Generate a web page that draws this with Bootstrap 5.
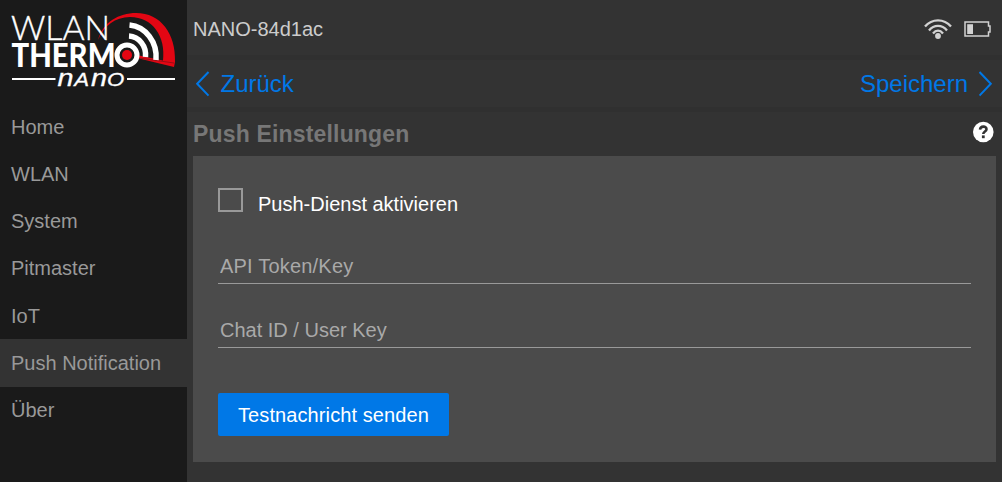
<!DOCTYPE html>
<html lang="de" data-bs-theme="dark">
<head>
<meta charset="utf-8">
<meta name="viewport" content="width=device-width, initial-scale=1">
<title>WLANThermo Nano</title>
<link href="https://cdn.jsdelivr.net/npm/bootstrap@5.3.0/dist/css/bootstrap.min.css" rel="stylesheet">
<style>
body{font-family:"Liberation Sans",Arial,sans-serif;font-size:20px;line-height:24px;background:#333;color:#ccc;overflow:hidden}
svg{display:block;flex:none}
.side{width:187px;background:#1a1a1a;padding-top:103.500px;position:relative}
.logo{position:absolute;left:0;top:0}
.side .nav-link{color:#999;padding:11.250px 11px 11.950px;line-height:24px;border-radius:0}
.side .nav-link.active{background:#333}
.topbar{height:60px;padding:0 11px 2px 6px;border-bottom:5px solid #303030}
.actions{height:52px;padding:0 9px 0 9px;border-bottom:5px solid #303030;font-size:24px}
.actions a{color:#0078e7;text-decoration:none}
.back{margin-left:10.500px}
.save{margin-right:11px}
.heading{height:44px;padding:0 0 0 6px}
.heading h1{font-size:23px;font-weight:700;line-height:44px;margin:0;color:#777;letter-spacing:.17px}
.panel{margin:0 6px;background:#4b4b4b;height:306px;padding:32px 25px 0;color:#fff}
.form-check-input.box{width:25px;height:24px;border:2px solid #999;border-radius:0;background:transparent;margin:0}
.pushlabel{margin:4px 0 0 15px}
.field.form-control{border:0;border-bottom:1px solid #999;border-radius:0;background:transparent;padding:0 2px;height:35px;font-size:20px;line-height:24px;color:#fff}
.field.form-control::placeholder{color:#a9a9a9;opacity:1}
.field.token{margin-top:33px;letter-spacing:.2px}
.field.chat{margin-top:29px}
.btn.send{background:#0078e7;color:#fff;border:0;border-radius:2px;width:231px;height:43px;font-size:20px;padding:1px 0 0;line-height:42px;margin-top:45px;letter-spacing:.1px}
</style>
</head>
<body>
<div class="d-flex vh-100">
  <aside class="side flex-shrink-0">
    <svg class="logo" width="187" height="100" viewBox="0 0 187 100" role="img" aria-label="WLANThermo Nano">
      <path d="M98 40C103 22 119 13 136 13C161 13 176 34 175 62L174 67L139 58.5V55.5L163 60.5C166 37 153 17 130 17C115 17 104 26 98 40Z" fill="#e30613"/>
      <path d="M139 58L174 63" stroke="#7a1015" stroke-width=".7"/>
      <g fill="none" stroke="#fff">
        <path d="M129.500 25A29 32 0 0 1 156 60" stroke-width="5.500"/>
        <path d="M129 36A17.500 19 0 0 1 145.500 57" stroke-width="5.500"/>
        <circle cx="127" cy="55" r="10" stroke-width="5" fill="#1a1a1a"/>
        <path d="M12 79H55.500M127 79H175" stroke-width="2"/>
      </g>
      <circle cx="127" cy="55" r="5" fill="#e30613"/>
      <g fill="#fff">
        <text x="11" y="40" font-family="Lato" font-weight="300" stroke="#fff" stroke-width=".4" font-size="34" textLength="99" lengthAdjust="spacingAndGlyphs">WLAN</text>
        <text x="11.500" y="66.500" font-family="Lato" font-weight="900" font-size="32.500" textLength="104" lengthAdjust="spacingAndGlyphs">THERM</text>
        <text transform="translate(57.500 85.500) scale(1.2 1)" font-family="Liberation Sans" font-style="italic" font-size="24" stroke="#fff" stroke-width=".3"><tspan x="0">n</tspan><tspan x="14" font-size="18.500">A</tspan><tspan x="28">n</tspan><tspan x="41.300" font-size="18.500">O</tspan></text>
      </g>
    </svg>
    <nav class="nav flex-column">
      <a class="nav-link" href="#">Home</a>
      <a class="nav-link" href="#">WLAN</a>
      <a class="nav-link" href="#">System</a>
      <a class="nav-link" href="#">Pitmaster</a>
      <a class="nav-link" href="#">IoT</a>
      <a class="nav-link active" href="#">Push Notification</a>
      <a class="nav-link" href="#">Über</a>
    </nav>
  </aside>
  <main class="flex-grow-1">
    <header class="topbar d-flex align-items-center">
      <span class="me-auto pt-1">NANO-84d1ac</span>
      <svg class="mt-1 me-2" width="32" height="22" viewBox="0 0 32 22" fill="none" stroke="#d2d2d2" stroke-width="2.300">
        <path d="M1 8.500C8 .2 20 .2 27 8.500M5 12.500C10 6.300 18 6.300 23 12.500M9 15.500C12 11.700 16 11.700 19 15.500"/>
        <circle cx="14" cy="18" r="2.900" fill="#d2d2d2" stroke="none"/>
      </svg>
      <svg class="mt-1" width="27" height="16" viewBox="0 0 27 16">
        <path d="M1 1H24.500V5H26V11H24.500V15H1Z" fill="none" stroke="#d2d2d2" stroke-width="1.500"/>
        <path d="M3.200 3.200H9V13H3.200Z" fill="#d2d2d2"/>
      </svg>
    </header>
    <div class="actions d-flex align-items-center justify-content-between">
      <a href="#" class="d-flex align-items-center"><svg width="14" height="26" viewBox="0 0 14 26" fill="none" stroke="#0078e7" stroke-width="2"><path d="M12.500 1L1.200 12.800L12.500 24.600"/></svg><span class="back">Zurück</span></a>
      <a href="#" class="d-flex align-items-center"><span class="save">Speichern</span><svg width="14" height="26" viewBox="0 0 14 26" fill="none" stroke="#0078e7" stroke-width="2"><path d="M.5 1L11.800 12.800L.5 24.600"/></svg></a>
    </div>
    <div class="heading d-flex align-items-center justify-content-between">
      <h1>Push Einstellungen</h1>
      <svg class="me-1 mb-1" width="28" height="22" viewBox="0 0 28 22"><circle cx="13.300" cy="11" r="10.300" fill="#fff"/><path d="M10 8.700C10.300 4.700 16.600 4.700 16.500 8.300C16.500 10.700 13.300 10.400 13.300 13" fill="none" stroke="#333" stroke-width="2.600"/><path d="M11.900 14.400H14.700V17.200H11.900Z" fill="#333"/></svg>
    </div>
    <form class="panel">
      <div class="d-flex align-items-start">
        <input class="form-check-input box" type="checkbox" id="push">
        <label for="push" class="pushlabel">Push-Dienst aktivieren</label>
      </div>
      <input class="form-control field token" placeholder="API Token/Key" aria-label="API Token/Key">
      <input class="form-control field chat" placeholder="Chat ID / User Key" aria-label="Chat ID / User Key">
      <button type="button" class="btn send">Testnachricht senden</button>
    </form>
  </main>
</div>
<script src="https://cdn.jsdelivr.net/npm/bootstrap@5.3.0/dist/js/bootstrap.bundle.min.js"></script>
</body>
</html>
